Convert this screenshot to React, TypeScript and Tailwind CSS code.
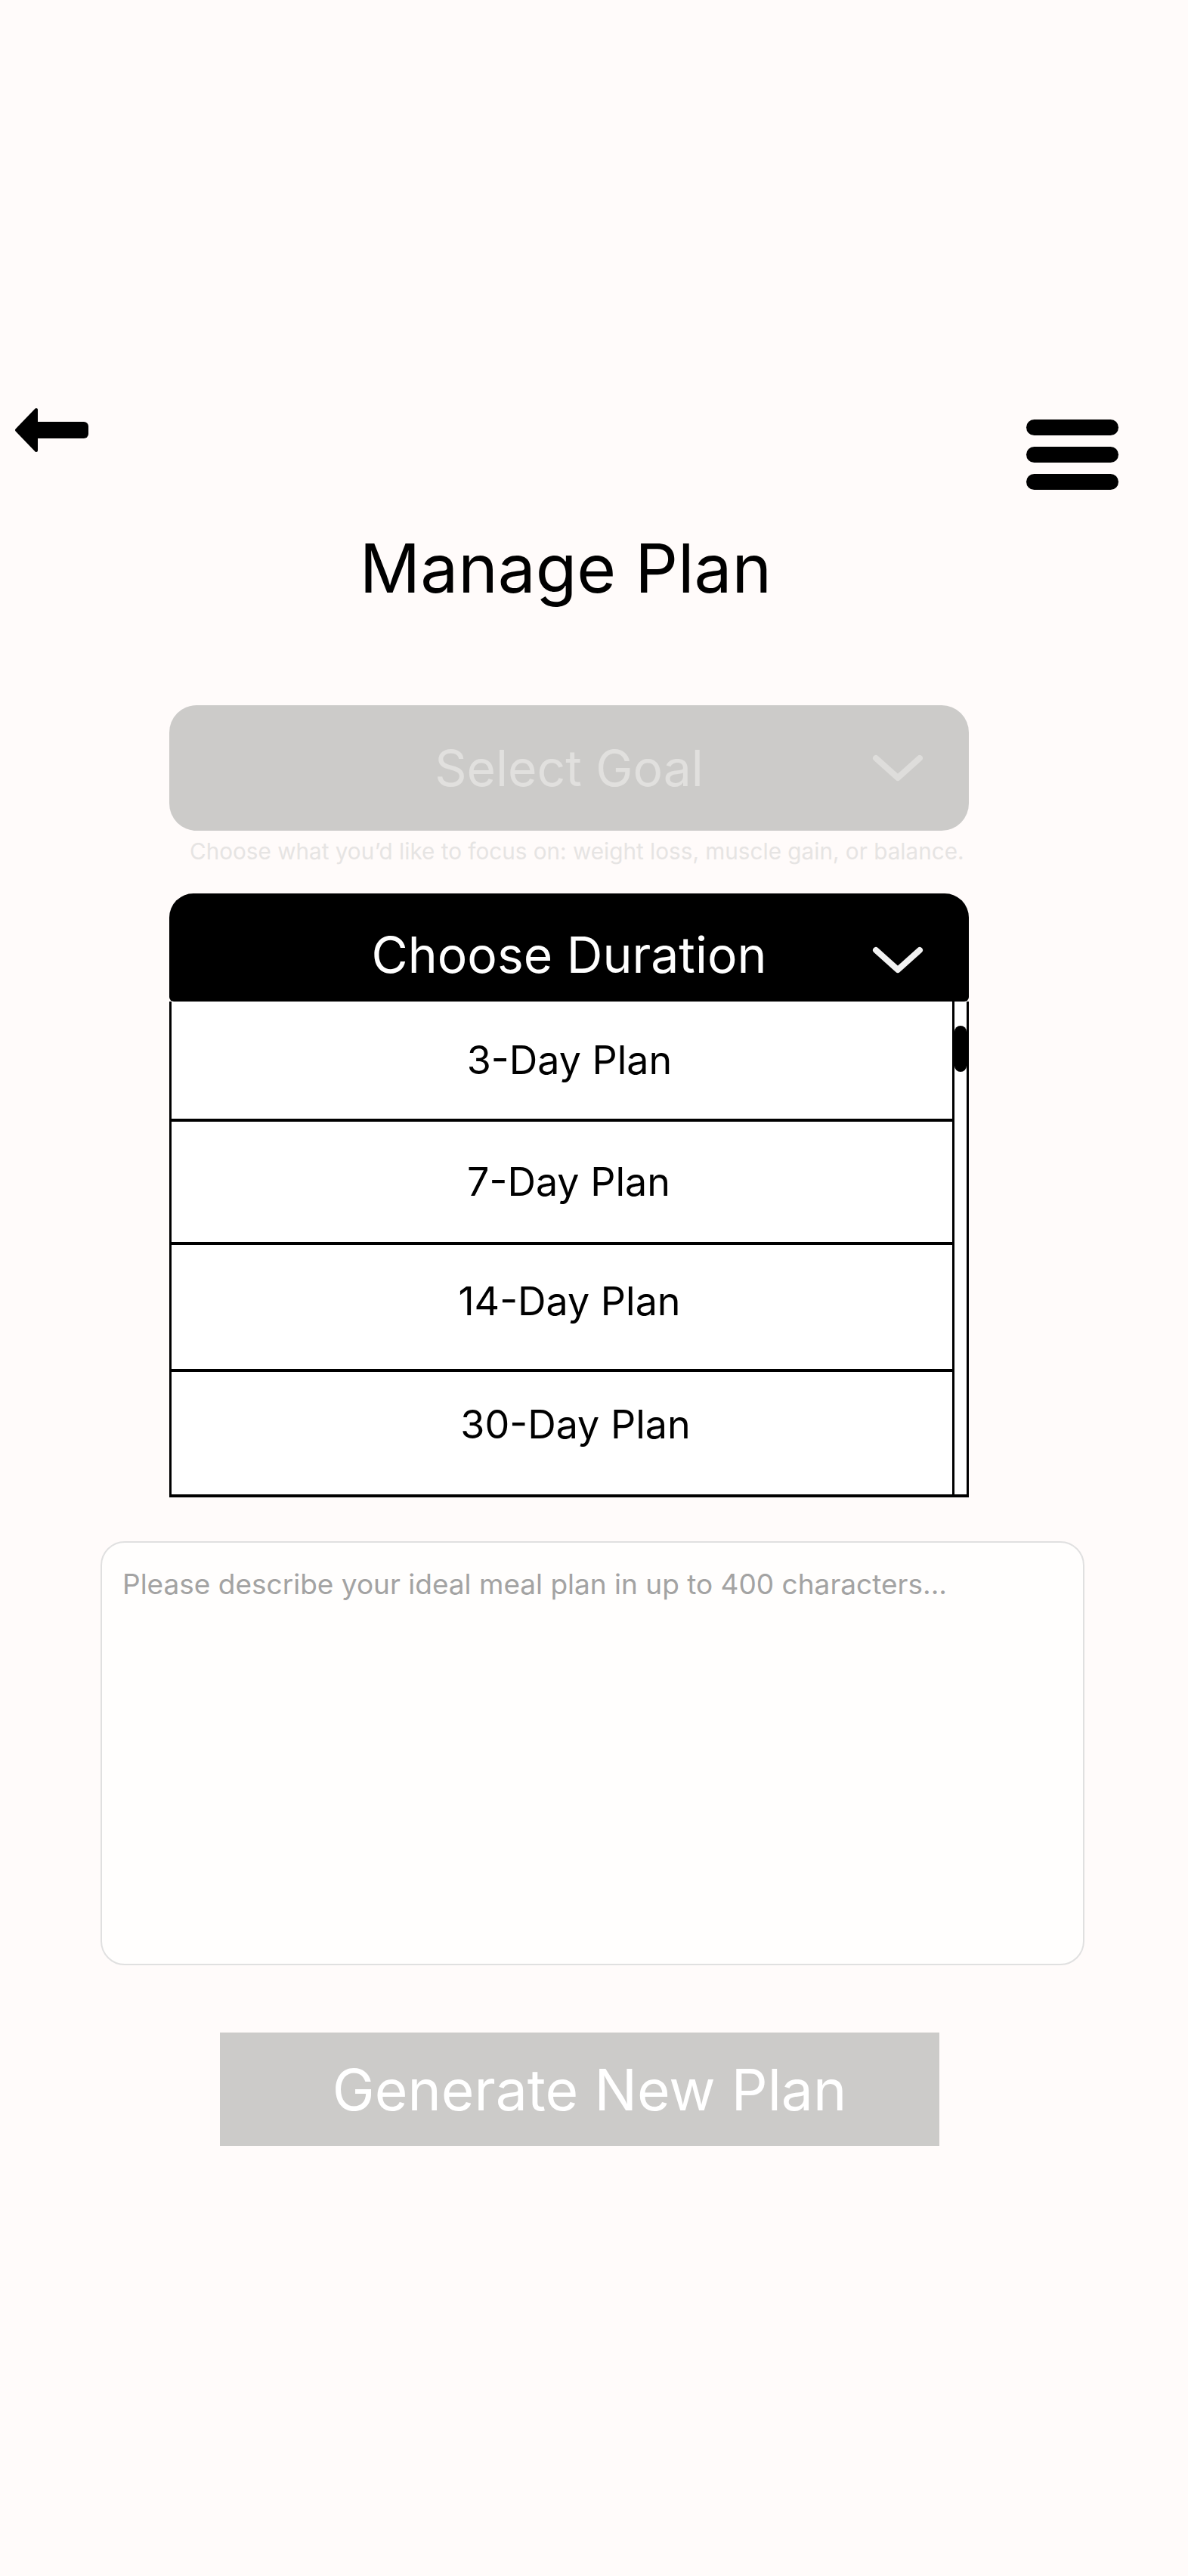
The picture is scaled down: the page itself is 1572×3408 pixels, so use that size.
import React, { useState } from 'react';

const durations = [
  { label: '3-Day Plan', h: 'h-[155px]', pad: 'pl-[20px]' },
  { label: '7-Day Plan', h: 'h-[163px]', pad: 'pl-[18px]' },
  { label: '14-Day Plan', h: 'h-[168px]', pad: 'pl-[20px] pb-[14px]' },
  { label: '30-Day Plan', h: 'h-[166px]', pad: 'pl-[36px] pb-[22px]' },
];

function Chevron({ color }: { color: string }) {
  return (
    <svg width="68" height="36" viewBox="0 0 68 36" fill="none">
      <path d="M5 5 L34 31 L63 5" stroke={color} strokeWidth="8" strokeLinecap="round" strokeLinejoin="round" />
    </svg>
  );
}

export default function App() {
  const [note, setNote] = useState('');

  return (
    <div className="min-h-screen bg-[#fffbfa] font-['Inter',sans-serif] text-black">
      {/* top bar */}
      <div className="flex items-start justify-between pl-[18px] pr-[92px] pt-[538px]">
        <button aria-label="Back">
          <svg width="100" height="62" viewBox="0 0 100 62">
            <path d="M4 31 L30 4 L30 58 Z" fill="black" stroke="black" strokeWidth="4" strokeLinejoin="round" />
            <rect x="26" y="20" width="73" height="22" rx="6" fill="black" />
          </svg>
        </button>
        <button aria-label="Menu" className="mt-[17px] flex flex-col gap-[15px]">
          <span className="block h-[21px] w-[122px] rounded-full bg-black" />
          <span className="block h-[21px] w-[122px] rounded-full bg-black" />
          <span className="block h-[21px] w-[122px] rounded-full bg-black" />
        </button>
      </div>

      <h1 className="ml-[224px] mt-[59px] w-[1058px] pr-[9px] text-center text-[89px] leading-none font-normal">
        Manage Plan
      </h1>

      <div className="ml-[224px] w-[1058px]">
        {/* goal select (disabled look) */}
        <div className="mt-[137px] grid h-[166px] grid-cols-[1fr_auto_1fr] items-center rounded-[36px] bg-[#cccbc9]">
          <span />
          <span className="text-[66px] leading-none text-[#e1e0de]">Select Goal</span>
          <span className="flex justify-end pr-[60px]">
            <Chevron color="#dedddb" />
          </span>
        </div>
        <p className="mt-[10px] whitespace-nowrap pl-[27px] text-[29.7px] leading-[35px] text-[#e6e4e3]">
          Choose what you’d like to focus on: weight loss, muscle gain, or balance.
        </p>

        {/* duration dropdown */}
        <div className="mt-[38px] grid h-[143px] grid-cols-[1fr_auto_1fr] items-center rounded-t-[32px] rounded-b-[6px] bg-black pt-[18px]">
          <span />
          <span className="text-[66px] leading-none text-white">Choose Duration</span>
          <span className="mt-[15px] flex justify-end pr-[60px]">
            <Chevron color="#f2f2f2" />
          </span>
        </div>
        <div className="flex border-x-[3px] border-b-[4px] border-black bg-white">
          <div className="flex flex-1 flex-col">
            {durations.map((d, i) => (
              <div
                key={d.label}
                className={`flex items-center justify-center ${d.h} ${d.pad} ${i > 0 ? 'border-t-[4px] border-black' : ''}`}
              >
                <span className="text-[52px] leading-none">{d.label}</span>
              </div>
            ))}
          </div>
          <div className="w-[19px] border-l-[3px] border-black">
            <div className="mt-[32px] h-[61px] w-full rounded-full bg-black" />
          </div>
        </div>
      </div>

      <textarea
        value={note}
        onChange={(e) => setNote(e.target.value)}
        maxLength={400}
        placeholder="Please describe your ideal meal plan in up to 400 characters..."
        className="ml-[133px] mt-[58px] block h-[561px] w-[1302px] resize-none rounded-[32px] border-2 border-[#e0e0e0] bg-[#fffefd] pl-[27px] pr-[27px] pt-[31px] text-[37px] leading-[48px] outline-none placeholder:text-[#a3a3a3]"
      />

      <button className="ml-[291px] mt-[89px] flex h-[150px] w-[952px] items-center justify-center bg-[#cccbc9] pl-[26px] text-[75px] leading-none text-white">
        Generate New Plan
      </button>
    </div>
  );
}
